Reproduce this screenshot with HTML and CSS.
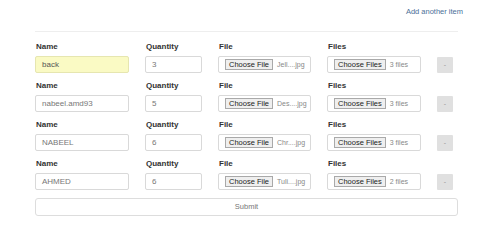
FILE: index.html
```html
<!DOCTYPE html>
<html>
<head>
<meta charset="utf-8">
<link rel="stylesheet" href="styles.css">
</head>
<body>
<div class="page">
  <div class="top"><a class="add-link">Add another item</a></div>
  <hr class="sep">
  <form class="rows">
    <div class="row">
      <div class="field"><label class="lbl">Name</label><div class="input hl">back</div></div>
      <div class="field"><label class="lbl">Quantity</label><div class="input">3</div></div>
      <div class="field"><label class="lbl">File</label><div class="input file"><span class="fbtn">Choose File</span><span class="fname">Jell....jpg</span></div></div>
      <div class="field"><label class="lbl">Files</label><div class="input file"><span class="fbtn">Choose Files</span><span class="fname">3 files</span></div></div>
      <div class="field"><span class="lbl">&nbsp;</span><span class="rm">-</span></div>
    </div>
    <div class="row">
      <div class="field"><label class="lbl">Name</label><div class="input">nabeel.amd93</div></div>
      <div class="field"><label class="lbl">Quantity</label><div class="input">5</div></div>
      <div class="field"><label class="lbl">File</label><div class="input file"><span class="fbtn">Choose File</span><span class="fname">Des....jpg</span></div></div>
      <div class="field"><label class="lbl">Files</label><div class="input file"><span class="fbtn">Choose Files</span><span class="fname">3 files</span></div></div>
      <div class="field"><span class="lbl">&nbsp;</span><span class="rm">-</span></div>
    </div>
    <div class="row">
      <div class="field"><label class="lbl">Name</label><div class="input">NABEEL</div></div>
      <div class="field"><label class="lbl">Quantity</label><div class="input">6</div></div>
      <div class="field"><label class="lbl">File</label><div class="input file"><span class="fbtn">Choose File</span><span class="fname">Chr....jpg</span></div></div>
      <div class="field"><label class="lbl">Files</label><div class="input file"><span class="fbtn">Choose Files</span><span class="fname">3 files</span></div></div>
      <div class="field"><span class="lbl">&nbsp;</span><span class="rm">-</span></div>
    </div>
    <div class="row">
      <div class="field"><label class="lbl">Name</label><div class="input">AHMED</div></div>
      <div class="field"><label class="lbl">Quantity</label><div class="input">6</div></div>
      <div class="field"><label class="lbl">File</label><div class="input file"><span class="fbtn">Choose File</span><span class="fname">Tuli....jpg</span></div></div>
      <div class="field"><label class="lbl">Files</label><div class="input file"><span class="fbtn">Choose Files</span><span class="fname">2 files</span></div></div>
      <div class="field"><span class="lbl">&nbsp;</span><span class="rm">-</span></div>
    </div>
    <div class="submit">Submit</div>
  </form>
</div>
</body>
</html>
```
FILE: styles.css
```css
html, body {
  margin: 0;
  padding: 0;
  background: #ffffff;
}
body {
  font-family: "Liberation Sans", Arial, sans-serif;
  font-size: 8px;
  color: #333333;
}
.page {
  width: 423px;
  padding-left: 35px;
}
.top {
  display: flex;
  justify-content: flex-end;
  height: 12px;
  padding-top: 6px;
  margin-right: -5px;
}
.add-link {
  color: #4a6f98;
  font-size: 7.5px;
  line-height: 12px;
}
.sep {
  margin: 13px 0 0 0;
  border: 0;
  border-top: 1px solid #eeeeee;
  height: 0;
}
.rows {
  display: flex;
  flex-direction: column;
  gap: 8px;
  padding-top: 10px;
  margin: 0;
}
.row {
  display: grid;
  grid-template-columns: 94px 57px 93px 94px 16px;
  column-gap: 16px;
}
.field {
  display: flex;
  flex-direction: column;
}
.lbl {
  font-weight: bold;
  font-size: 8px;
  line-height: 10px;
  height: 10px;
  margin-bottom: 4px;
  color: #333333;
  padding-left: 1px;
}
.input {
  box-sizing: border-box;
  height: 17px;
  border: 1px solid #d9d9d9;
  border-radius: 2px;
  padding: 0 6px;
  line-height: 15px;
  color: #777777;
  background: #ffffff;
  white-space: nowrap;
  overflow: hidden;
}
.input.hl {
  background: #fafac4;
  border-color: #e6e6b0;
  color: #555555;
}
.input.file {
  display: flex;
  align-items: center;
  padding: 0 5px 0 6px;
  gap: 4px;
}
.fbtn {
  box-sizing: border-box;
  height: 11px;
  line-height: 9px;
  padding: 0 3px;
  border: 1px solid #a9a9a9;
  background: #efefef;
  color: #222222;
  font-size: 7.5px;
}
.fname {
  color: #888888;
  font-size: 7px;
}
.rm {
  box-sizing: border-box;
  width: 16px;
  height: 16px;
  margin-top: 1px;
  background: #e0e0e0;
  border-radius: 1px;
  color: #999999;
  font-size: 7px;
  line-height: 16px;
  text-align: center;
}
.submit {
  box-sizing: border-box;
  height: 18px;
  border: 1px solid #dddddd;
  border-radius: 3px;
  text-align: center;
  line-height: 16px;
  color: #777777;
  font-size: 7.5px;
}
```
